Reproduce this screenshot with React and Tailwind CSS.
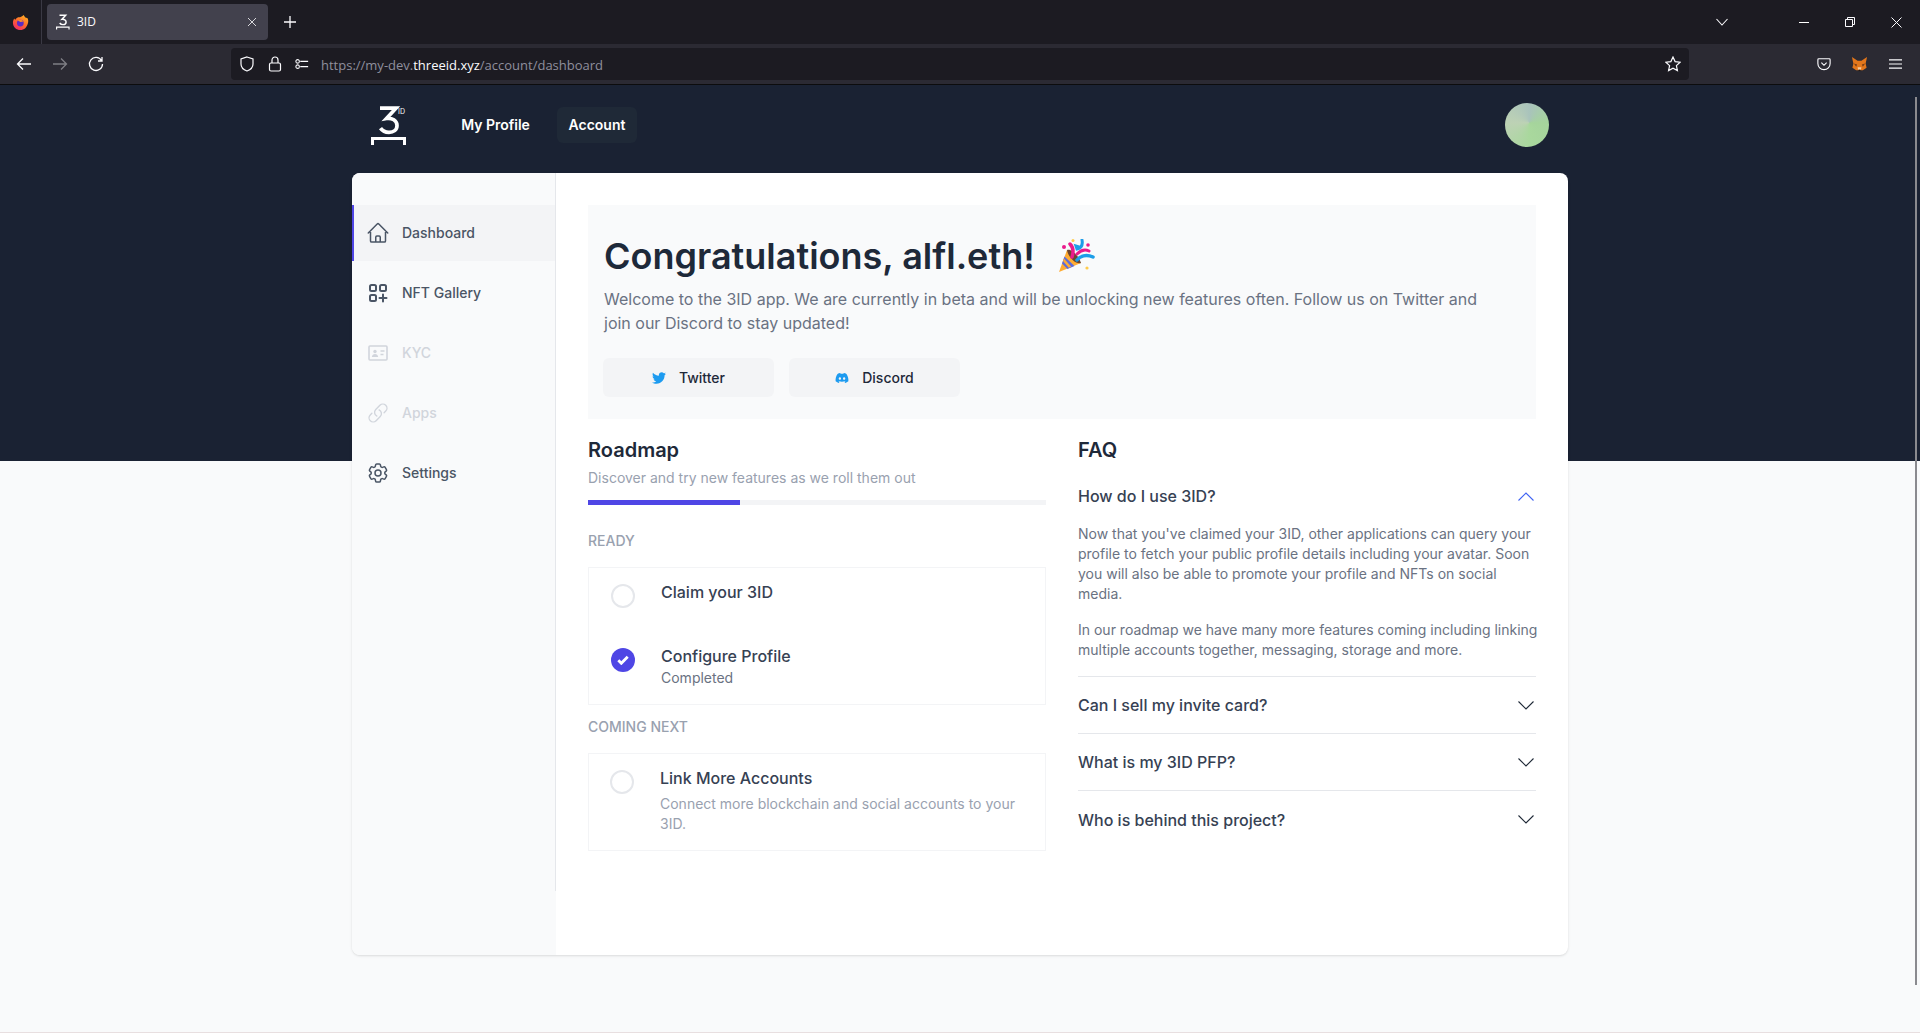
import { HiOutlineHome, HiOutlineLink, HiOutlineCog6Tooth } from 'react-icons/hi2'
import { FaTwitter, FaDiscord } from 'react-icons/fa'

const Logo3ID = ({ className, showId = true }) => (
  <svg viewBox="0 0 36 39" className={className} fill="none">
    <path
      d="M9 2.2h16L15.5 12.5c5.5 -1 10.5 2.2 10.5 7 0 4.6 -3.6 6.8 -8 6.8 -3.4 0 -6.6 -1.4 -8.5 -4.2"
      stroke="white"
      strokeWidth="3.7"
    />
    <path d="M1.5 39v-6.5h32V39" stroke="white" strokeWidth="3" />
    {showId && (
      <text x="27" y="7.5" fill="white" fontSize="7" fontFamily="Inter, sans-serif">
        ID
      </text>
    )}
  </svg>
)

const FirefoxIcon = () => (
  <svg viewBox="0 0 18 18" className="w-[17px] h-[17px]">
    <defs>
      <linearGradient id="ffg" x1="0.8" y1="0" x2="0.2" y2="1">
        <stop offset="0" stopColor="#ffb224" />
        <stop offset="0.5" stopColor="#ff6a2b" />
        <stop offset="1" stopColor="#f0246a" />
      </linearGradient>
    </defs>
    <path
      d="M12.5 1c.6 1.5 1 2 2.2 3 .8-.1 1.3.1 1.8.6.7 1.6.9 3 .5 4.6C16 14 12.800 17 9 17c-4.400 0-8-3.400-8-7.800 0-1.700.5-3.200 1.400-4.400.3.600.6 1 1.100 1.300C5 3.600 7 3.200 8.500 3.500 10 2.800 11.500 2 12.500 1z"
      fill="url(#ffg)"
    />
    <circle cx="8.800" cy="9.600" r="3.600" fill="#5b2bc4" />
    <path d="M6 7c2-1.500 5-1 6 1l-3 .5z" fill="#ff8a2b" />
  </svg>
)

const MetaMaskFox = () => (
  <svg viewBox="0 0 18 18" className="w-[17px] h-[17px]">
    <path d="M1 1l6 4h4l6-4-1.500 7 1 4.500-4 2.500H5.500l-4-2.500 1-4.500z" fill="#e2761b" />
    <path d="M3 8l3.500 1-1 2.500zM15 8l-3.500 1 1 2.500z" fill="#763d16" />
    <path d="M7 12h4l-.500 2.500h-3z" fill="#f6c99b" />
    <path d="M8 14.500h2v1.500H8z" fill="#24170f" />
  </svg>
)

const NftIcon = ({ className }) => (
  <svg viewBox="-2 -2 24 24" className={className} fill="none" stroke="currentColor" strokeWidth="2">
    <rect x="2" y="2" width="6" height="6" rx="1.500" />
    <rect x="12" y="2" width="6" height="6" rx="1.500" />
    <rect x="2" y="12" width="6" height="6" rx="1.500" />
    <path d="M15 11.500v7M11.500 15h7" strokeLinecap="round" />
  </svg>
)

const KycIcon = ({ className }) => (
  <svg viewBox="-2 -2 24 24" className={className} fill="none" stroke="currentColor" strokeWidth="1.600">
    <rect x="1" y="3" width="18" height="14" rx="1" />
    <circle cx="7" cy="8.500" r="1.700" fill="currentColor" stroke="none" />
    <path d="M3.800 14c.3-2 1.500-3 3.200-3s2.900 1 3.200 3z" fill="currentColor" stroke="none" />
    <path d="M12.500 8h4M12.500 11.500h3" />
  </svg>
)

const PartyPopper = () => (
  <svg viewBox="0 0 37 34" className="w-[37px] h-[34px]">
    <path d="M9 11L1 33l22-9z" fill="#ffac33" />
    <path d="M6.500 17.500l-2.500 7 5.500 5.500 7-3z" fill="#5c6bdc" />
    <path d="M5 22l5.800 6.800 2.400-1-7.200-8.200z" fill="#ffac33" />
    <path d="M9 11c4-2 12 6 14 13-5 2-13-6-14-13z" fill="#6b4330" />
    <path d="M12 5c3 3 4 7 2 13" stroke="#ea1a8c" strokeWidth="3.500" fill="none" strokeLinecap="round" />
    <path d="M24 1c1 5-1 8-5 9l-1-3 3 1" stroke="#1d9de8" strokeWidth="3" fill="none" strokeLinecap="round" />
    <path d="M19 15c4-4 8-5 12-3" stroke="#ea1a8c" strokeWidth="3" fill="none" strokeLinecap="round" />
    <path d="M19 21c3-4 9-6 16-3" stroke="#1d9de8" strokeWidth="3.500" fill="none" strokeLinecap="round" />
    <circle cx="6" cy="8" r="2" fill="#ea1a8c" />
    <circle cx="15" cy="1.500" r="1.500" fill="#ffcc4d" />
    <circle cx="30" cy="6" r="1.800" fill="#ea1a8c" />
    <circle cx="29" cy="29" r="1.600" fill="#ffcc4d" />
  </svg>
)

const Chevron = ({ up }) => (
  <svg viewBox="0 0 16 9" className="w-4 h-[9px]" fill="none" stroke={up ? '#3f63f3' : '#1f2937'} strokeWidth="1.100">
    <path d={up ? 'M.5 8.500L8 1l7.500 7.500' : 'M.5 .5L8 8l7.500-7.500'} />
  </svg>
)

const navItems = [
  { label: 'Dashboard', Icon: HiOutlineHome, active: true },
  { label: 'NFT Gallery', Icon: NftIcon },
  { label: 'KYC', Icon: KycIcon, disabled: true },
  { label: 'Apps', Icon: HiOutlineLink, disabled: true, iconClass: 'w-[22px] h-[22px] mx-px shrink-0' },
  { label: 'Settings', Icon: HiOutlineCog6Tooth },
]

const faqs = ['Can I sell my invite card?', 'What is my 3ID PFP?', 'Who is behind this project?']

const BrowserChrome = () => (
  <div className="shrink-0 font-['Open_Sans',sans-serif]">
    {/* Tab strip */}
    <div className="h-11 bg-[#1c1b22] flex items-center text-white">
      <div className="w-[42px] h-11 flex items-center justify-center border-r border-[#3a3944]">
        <FirefoxIcon />
      </div>
      <div className="ml-[5px] w-[221px] h-9 bg-[#42414d] rounded flex items-center pl-[9px] pr-[11px]">
        <Logo3ID className="w-[14px] h-4" showId={false} />
        <span className="ml-[7px] text-xs text-[#fbfbfe] flex-1">3ID</span>
        <svg viewBox="0 0 10 10" className="w-[10px] h-[10px]" stroke="#d8d8dc" strokeWidth="1">
          <path d="M1 1l8 8M9 1l-8 8" />
        </svg>
      </div>
      <svg viewBox="0 0 14 14" className="w-[14px] h-[14px] ml-[15px]" stroke="#fbfbfe" strokeWidth="1.300">
        <path d="M7 1v12M1 7h12" />
      </svg>
      <div className="flex-1" />
      <svg viewBox="0 0 12 8" className="w-3 h-2" fill="none" stroke="#fbfbfe" strokeWidth="1.100">
        <path d="M.5 1L6 7l5.500-6" />
      </svg>
      <div className="w-[71px]" />
      <div className="w-[10px] h-px bg-white" />
      <svg viewBox="0 0 10 10" className="w-[10px] h-[10px] ml-9" fill="none" stroke="#fbfbfe" strokeWidth="1">
        <path d="M.5 2.500h7v7h-7zM2.500 2.500v-2h7v7h-2" />
      </svg>
      <svg viewBox="0 0 11 11" className="w-[11px] h-[11px] ml-9 mr-[18px]" stroke="#fbfbfe" strokeWidth="1">
        <path d="M.5 .5l10 10M10.500 .5l-10 10" />
      </svg>
    </div>
    {/* Navigation bar */}
    <div className="h-[41px] bg-[#2b2a33] border-b border-[#0c0c0d] flex items-center text-[#fbfbfe]">
      <svg viewBox="0 0 16 16" className="w-4 h-4 ml-4" fill="none" stroke="currentColor" strokeWidth="1.300">
        <path d="M15 8H1.500M7 2.500L1.500 8 7 13.500" />
      </svg>
      <svg viewBox="0 0 16 16" className="w-4 h-4 ml-5 opacity-40" fill="none" stroke="currentColor" strokeWidth="1.300">
        <path d="M1 8h13.500M9 2.500L14.500 8 9 13.500" />
      </svg>
      <svg viewBox="0 0 16 16" className="w-4 h-4 ml-5" fill="none" stroke="currentColor" strokeWidth="1.300">
        <path d="M13.500 4.500A6.500 6.500 0 1 0 14.500 8M14 1v4h-4" />
      </svg>
      <div className="ml-[127px] w-[1458px] h-8 bg-[#1c1b22] rounded flex items-center pl-[8px] pr-[8px]">
        <svg viewBox="0 0 16 16" className="w-4 h-4" fill="none" stroke="currentColor" strokeWidth="1.200">
          <path d="M8 1l6 2v5c0 3.500-2.500 5.800-6 7-3.500-1.200-6-3.500-6-7V3z" />
        </svg>
        <svg viewBox="0 0 14 16" className="w-[14px] h-4 ml-[13px]" fill="none" stroke="currentColor" strokeWidth="1.200">
          <rect x="1.500" y="7" width="11" height="8" rx="1.500" />
          <path d="M4 7V4a3 3 0 0 1 6 0v3" />
        </svg>
        <svg viewBox="0 0 16 12" className="w-[14px] h-3 ml-[13px]" fill="none" stroke="currentColor" strokeWidth="1.200">
          <circle cx="3" cy="3" r="2" />
          <circle cx="3" cy="9" r="2" />
          <path d="M6 3h9M6 9h9" />
        </svg>
        <span className="ml-[12px] mt-[3px] text-[13px] text-[#8f8f9d]">
          https://my-dev.<span className="text-[#fbfbfe]">threeid.xyz</span>/account/dashboard
        </span>
        <div className="flex-1" />
        <svg viewBox="0 0 16 16" className="w-4 h-4" fill="none" stroke="currentColor" strokeWidth="1.200">
          <path d="M8 1l2.100 4.600 5 .6-3.700 3.400 1 4.900L8 12.100l-4.400 2.400 1-4.900L.9 6.200l5-.6z" />
        </svg>
      </div>
      <svg viewBox="0 0 16 16" className="w-[14px] h-[14px] ml-[128px]" fill="none" stroke="currentColor" strokeWidth="1.300">
        <path d="M2 2h12a1 1 0 0 1 1 1v4.500c0 4-3 7-7 7s-7-3-7-7V3a1 1 0 0 1 1-1zM5 6.500l3 3 3-3" />
      </svg>
      <div className="ml-[20px]">
        <MetaMaskFox />
      </div>
      <svg viewBox="0 0 14 12" className="w-[13px] h-3 ml-[21px]" stroke="currentColor" strokeWidth="1.300">
        <path d="M0 1.500h14M0 6h14M0 10.500h14" />
      </svg>
    </div>
  </div>
)

const Sidebar = () => (
  <aside className="w-[204px] shrink-0 bg-[#f9fafb]">
    <nav className="h-[718px] border-r border-gray-200 pt-8 flex flex-col gap-1">
      {navItems.map(({ label, Icon, active, disabled, iconClass }) => (
        <div
          key={label}
          className={`h-14 pl-3 flex items-center gap-3 border-l-2 text-sm font-medium ${
            active ? 'border-[#4f46e5] bg-gray-100' : 'border-transparent'
          } ${disabled ? 'text-gray-300' : 'text-gray-600'}`}
        >
          <Icon className={iconClass || 'w-6 h-6 shrink-0'} />
          {label}
        </div>
      ))}
    </nav>
  </aside>
)

const Hero = () => (
  <section className="h-[214px] bg-[#f9fafb] pl-[15px] pr-4 pt-[31px]">
    <div className="flex items-center">
      <h1 className="text-[36px] leading-10 font-semibold text-gray-800 pl-px">Congratulations, alfl.eth!</h1>
      <div className="ml-[23px]">
        <PartyPopper />
      </div>
    </div>
    <p className="mt-[11px] ml-px text-base leading-6 text-gray-500 w-[900px]">
      Welcome to the 3ID app. We are currently in beta and will be unlocking new features often. Follow us on Twitter
      and join our Discord to stay updated!
    </p>
    <div className="mt-[23px] flex gap-[15px]">
      <div className="w-[171px] h-[39px] rounded-md bg-gray-100 flex items-center justify-center gap-[13px] text-sm font-medium text-gray-800">
        <FaTwitter className="w-[14px] h-[14px] text-[#1d9bf0]" />
        Twitter
      </div>
      <div className="w-[171px] h-[39px] rounded-md bg-gray-100 flex items-center justify-center gap-[13px] text-sm font-medium text-gray-800">
        <FaDiscord className="w-[14px] h-[14px] text-[#1d9bf0]" />
        Discord
      </div>
    </div>
  </section>
)

const Circle = () => <div className="w-6 h-6 rounded-full border-2 border-gray-200 shrink-0" />

const CheckedCircle = () => (
  <div className="w-6 h-6 rounded-full bg-[#4f46e5] flex items-center justify-center shrink-0">
    <svg viewBox="0 0 12 10" className="w-3 h-[10px]" fill="none" stroke="white" strokeWidth="2.800">
      <path d="M1.300 5.300l3 3 6.400-6.600" />
    </svg>
  </div>
)

const Roadmap = () => (
  <section className="w-[458px]">
    <h2 className="text-xl leading-7 font-semibold text-gray-800">Roadmap</h2>
    <p className="mt-[4px] text-sm leading-5 text-gray-400">Discover and try new features as we roll them out</p>
    <div className="mt-[12px] h-[5px] bg-gray-100">
      <div className="w-[152px] h-full bg-[#4f46e5]" />
    </div>

    <h3 className="mt-[26px] text-sm leading-5 font-medium text-gray-400">READY</h3>
    <div className="mt-4 h-[138px] border border-gray-100 pl-[22px] pt-4">
      <div className="flex gap-[26px] h-16">
        <Circle />
        <div className="text-base leading-6 font-medium text-gray-700 -mt-[4px]">Claim your 3ID</div>
      </div>
      <div className="flex gap-[26px]">
        <CheckedCircle />
        <div className="-mt-[4px]">
          <div className="text-base leading-6 font-medium text-gray-700">Configure Profile</div>
          <div className="text-sm leading-5 text-gray-500">Completed</div>
        </div>
      </div>
    </div>

    <h3 className="mt-[12px] text-sm leading-5 font-medium text-gray-400">COMING NEXT</h3>
    <div className="mt-4 h-[98px] border border-gray-100 pl-[21px] pt-4 flex gap-[26px]">
      <Circle />
      <div className="-mt-[4px]">
        <div className="text-base leading-6 font-medium text-gray-700">Link More Accounts</div>
        <div className="mt-[4px] text-sm leading-5 text-gray-400 w-[370px]">
          Connect more blockchain and social accounts to your 3ID.
        </div>
      </div>
    </div>
  </section>
)

const Faq = () => (
  <section className="w-[458px]">
    <h2 className="text-xl leading-7 font-semibold text-gray-800">FAQ</h2>
    <div className="mt-[20px] flex items-center justify-between h-6 text-base font-medium text-gray-700">
      How do I use 3ID?
      <span className="pr-[2px]">
        <Chevron up />
      </span>
    </div>
    <div className="mt-[16px] -mr-[6px] text-sm leading-5 text-gray-500">
      <p>
        Now that you've claimed your 3ID, other applications can query your profile to fetch your public profile details
        including your avatar. Soon you will also be able to promote your profile and NFTs on social media.
      </p>
      <p className="mt-4">
        In our roadmap we have many more features coming including linking multiple accounts together, messaging, storage
        and more.
      </p>
    </div>
    <div className="mt-4 border-b border-gray-200" />
    {faqs.map((q, i) => (
      <div
        key={q}
        className={`h-[57px] flex items-center justify-between text-base font-medium text-gray-700 ${
          i < faqs.length - 1 ? 'border-b border-gray-200' : ''
        }`}
      >
        {q}
        <span className="pr-[2px]">
          <Chevron />
        </span>
      </div>
    ))}
  </section>
)

export default function App() {
  return (
    <div className="relative h-[1033px] overflow-hidden flex flex-col bg-[#f9fafb] font-['Inter',sans-serif]">
      <BrowserChrome />

      <div className="h-[376px] shrink-0 bg-[#1a2233]">
        <header className="w-[1216px] mx-auto h-20 pl-[19px] pr-[19px] flex items-center">
          <Logo3ID className="w-9 h-[39px]" />
          <nav className="ml-[43px] flex gap-4 text-sm font-semibold text-white">
            <div className="w-[91px] h-9 flex items-center justify-center">My Profile</div>
            <div className="w-20 h-9 flex items-center justify-center rounded-md bg-[#1f2937]">Account</div>
          </nav>
          <div className="flex-1" />
          <div className="w-11 h-11 rounded-full bg-[conic-gradient(at_55%_45%,#a9c3bc,#a5d49c,#a9d89d,#bdd2b5,#a9c3bc)]" />
        </header>
      </div>

      <main className="relative -mt-[288px] mx-auto w-[1216px] h-[782px] flex bg-white rounded-lg shadow overflow-hidden">
        <Sidebar />
        <div className="flex-1 pt-8 pl-[32px] pr-[32px]">
          <Hero />
          <div className="mt-[17px] flex justify-between">
            <Roadmap />
            <Faq />
          </div>
        </div>
      </main>

      {/* Page scrollbar */}
      <div className="absolute left-[1915px] top-[97px] w-[2px] h-[888px] bg-[#8a8a8f]" />
      <div className="absolute left-0 bottom-0 w-full h-px bg-[#e8dfe0]" />
    </div>
  )
}
